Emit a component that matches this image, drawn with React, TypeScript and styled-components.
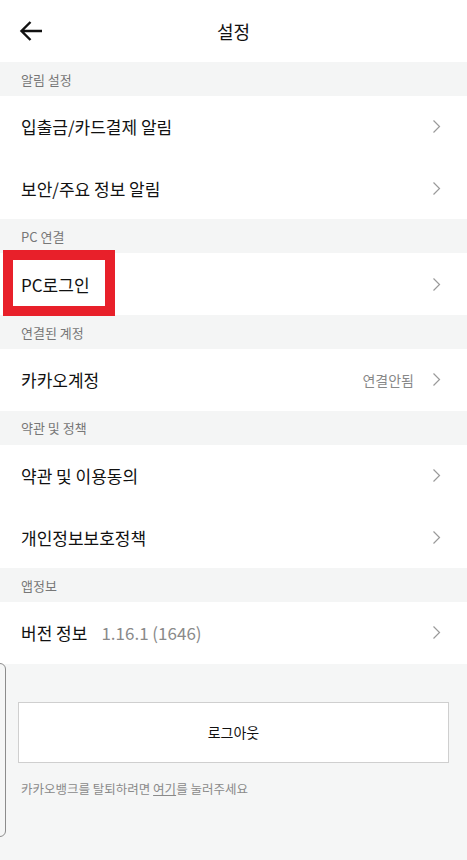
import React from 'react';
import styled, { createGlobalStyle } from 'styled-components';

const GlobalStyle = createGlobalStyle`
  html, body {
    margin: 0;
    padding: 0;
    background: #f5f6f6;
  }
  body {
    font-family: "Noto Sans CJK KR", "Noto Sans", Roboto, sans-serif;
    color: #111;
  }
`;

const Page = styled.div`
  position: relative;
  width: 467px;
  min-height: 860px;
  background: #f5f6f6;
  display: flex;
  flex-direction: column;
`;

const Header = styled.header`
  height: 62px;
  background: #fff;
  display: grid;
  grid-template-columns: 62px 1fr 62px;
  align-items: center;
`;

const BackButton = styled.button`
  border: 0;
  background: none;
  padding: 0 0 0 19px;
  height: 62px;
  display: flex;
  align-items: center;
  cursor: pointer;
`;

const Title = styled.h1`
  margin: 0;
  text-align: center;
  font-size: 18px;
  font-weight: 400;
  color: #111;
`;

const SectionTitle = styled.div`
  height: 34px;
  padding: 0 21px;
  display: flex;
  align-items: center;
  font-size: 13px;
  color: #777;
  background: #f4f5f5;
`;

const Row = styled.div`
  height: 61.7px;
  background: #fff;
  padding: 0 26px 0 21px;
  display: flex;
  align-items: center;
  cursor: pointer;
`;

const RowLabel = styled.span<{ $boxed?: boolean }>`
  font-size: 17px;
  color: #111;
  ${p => p.$boxed && `
    position: relative;
    &::after {
      content: '';
      position: absolute;
      left: -18px;
      top: -22px;
      width: 92px;
      height: 46px;
      border: 10px solid #e8202a;
    }
  `}
`;

const RowSub = styled.span`
  margin-left: 14px;
  font-size: 17px;
  color: #8a8a8a;
`;

const RowValue = styled.span`
  margin-left: auto;
  margin-right: 18px;
  font-size: 14px;
  color: #888;
`;

const Chevron = styled.svg<{ $auto?: boolean }>`
  margin-left: ${p => (p.$auto ? 'auto' : '0')};
  flex-shrink: 0;
`;

const Footer = styled.div`
  flex: 1;
  padding: 38px 18px 0;
  display: flex;
  flex-direction: column;
`;

const LogoutButton = styled.button`
  height: 61px;
  background: #fff;
  border: 1px solid #cfcfcf;
  font-family: inherit;
  font-size: 14px;
  color: #111;
  cursor: pointer;
`;

const Notice = styled.p`
  margin: 16px 0 0 3px;
  font-size: 12.5px;
  color: #8a8a8a;
  a {
    color: #8a8a8a;
    text-decoration: underline;
  }
`;

const EdgeMark = styled.div`
  position: absolute;
  left: -6px;
  top: 663px;
  width: 10px;
  height: 172px;
  border: 1px solid #8c8c8c;
  border-radius: 6px;
  pointer-events: none;
`;

const ChevronIcon = ({ auto = true }: { auto?: boolean }) => (
  <Chevron $auto={auto} width="9" height="15" viewBox="0 0 9 15" fill="none">
    <path d="M1.5 1.5L7.5 7.5L1.5 13.5" stroke="#9a9a9a" strokeWidth="1.2" />
  </Chevron>
);

const App = () => {
  return (
    <>
      <GlobalStyle />
      <Page>
        <Header>
          <BackButton aria-label="뒤로">
            <svg width="24" height="22" viewBox="0 0 24 22" fill="none">
              <path d="M23 11H2.5M11.5 2L2.5 11L11.5 20" stroke="#111" strokeWidth="2.4" />
            </svg>
          </BackButton>
          <Title>설정</Title>
          <div />
        </Header>

        <SectionTitle>알림 설정</SectionTitle>
        <Row>
          <RowLabel>입출금/카드결제 알림</RowLabel>
          <ChevronIcon />
        </Row>
        <Row>
          <RowLabel>보안/주요 정보 알림</RowLabel>
          <ChevronIcon />
        </Row>

        <SectionTitle>PC 연결</SectionTitle>
        <Row>
          <RowLabel $boxed>PC로그인</RowLabel>
          <ChevronIcon />
        </Row>

        <SectionTitle>연결된 계정</SectionTitle>
        <Row>
          <RowLabel>카카오계정</RowLabel>
          <RowValue>연결안됨</RowValue>
          <ChevronIcon auto={false} />
        </Row>

        <SectionTitle>약관 및 정책</SectionTitle>
        <Row>
          <RowLabel>약관 및 이용동의</RowLabel>
          <ChevronIcon />
        </Row>
        <Row>
          <RowLabel>개인정보보호정책</RowLabel>
          <ChevronIcon />
        </Row>

        <SectionTitle>앱정보</SectionTitle>
        <Row>
          <RowLabel>버전 정보</RowLabel>
          <RowSub>1.16.1 (1646)</RowSub>
          <ChevronIcon />
        </Row>

        <Footer>
          <LogoutButton>로그아웃</LogoutButton>
          <Notice>
            카카오뱅크를 탈퇴하려면 <a>여기</a>를 눌러주세요
          </Notice>
        </Footer>

        <EdgeMark />
      </Page>
    </>
  );
};

export default App;
